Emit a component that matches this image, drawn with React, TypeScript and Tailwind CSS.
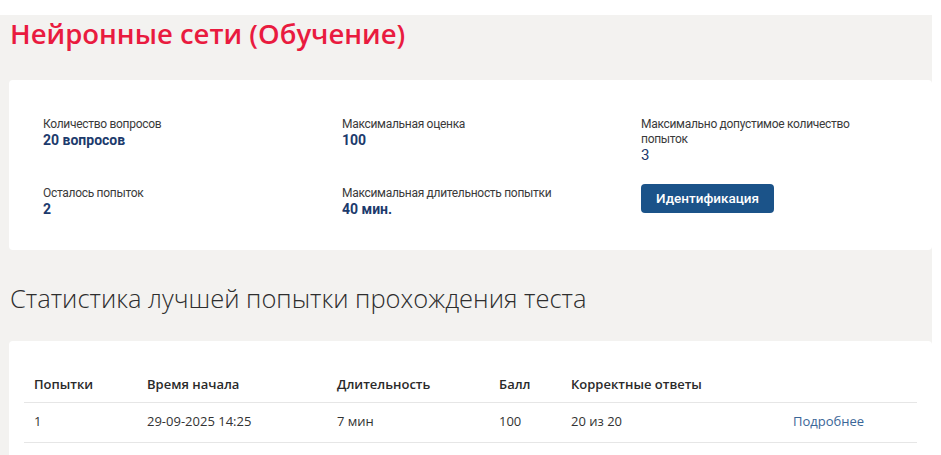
const stats = [
  { label: 'Количество вопросов', value: '20 вопросов' },
  { label: 'Максимальная оценка', value: '100' },
  { label: 'Максимально допустимое количество попыток', value: '3', normal: true },
  { label: 'Осталось попыток', value: '2' },
  { label: 'Максимальная длительность попытки', value: '40 мин.' },
]

const columns = ['Попытки', 'Время начала', 'Длительность', 'Балл', 'Корректные ответы', '']

const attempts = [
  { n: '1', start: '29-09-2025 14:25', duration: '7 мин', score: '100', correct: '20 из 20' },
]

function Stat({ label, value, normal }: { label: string; value: string; normal?: boolean }) {
  return (
    <div className="pt-[2px] pr-10 font-['Roboto','Noto_Sans',sans-serif]">
      <p className="text-[12px] leading-[15px] tracking-[-0.3px] text-[#3a3a3a]">{label}</p>
      <p
        className={
          normal
            ? 'text-[15px] leading-[17px] text-[#1c3a6c]'
            : 'text-[14px] font-bold leading-[17px] text-[#1c3a6c]'
        }
      >
        {value}
      </p>
    </div>
  )
}

export default function App() {
  return (
    <div className="min-h-screen bg-white pt-[15px] font-['Open_Sans','Noto_Sans',sans-serif]">
      <div className="w-[932px] bg-[#f3f2f0] pb-10 pl-[9px]">
        <h1 className="pl-[1px] text-[27.5px] font-semibold leading-[38px] text-[#e91b3f]">
          Нейронные сети (Обучение)
        </h1>

        <div className="mt-[27px] rounded-[4px] bg-white pt-[35px] pb-[32px] pl-[34px]">
          <div className="grid grid-cols-[299px_299px_1fr] gap-y-[20px]">
            {stats.slice(0, 3).map((s) => (
              <Stat key={s.label} {...s} />
            ))}
            {stats.slice(3).map((s) => (
              <Stat key={s.label} {...s} />
            ))}
            <div>
              <button
                type="button"
                className="h-[29px] rounded-[4px] bg-[#1b5389] px-[15px] font-['Roboto','Noto_Sans',sans-serif] text-[13.5px] font-medium text-white"
              >
                Идентификация
              </button>
            </div>
          </div>
        </div>

        <h2 className="pt-[32px] pb-[27px] pl-[1px] text-[25.5px] font-light leading-[32px] text-[#2e2e2e]">
          Статистика лучшей попытки прохождения теста
        </h2>

        <div className="rounded-[4px] bg-white pt-[27px] pr-[15px] pb-6 pl-[15px]">
          <table className="w-full table-fixed border-collapse text-left text-[13px] text-[#333]">
            <colgroup>
              <col className="w-[113px]" />
              <col className="w-[190px]" />
              <col className="w-[162px]" />
              <col className="w-[72px]" />
              <col className="w-[222px]" />
              <col />
            </colgroup>
            <thead>
              <tr className="border-b border-[#e6e6e6]">
                {columns.map((c, i) => (
                  <th key={i} className="h-[34px] px-[10px] align-middle font-semibold text-[#2a2a2a]">
                    {c}
                  </th>
                ))}
              </tr>
            </thead>
            <tbody>
              {attempts.map((a) => (
                <tr key={a.n} className="border-b border-[#e6e6e6]">
                  <td className="h-[40px] px-[10px] align-middle">{a.n}</td>
                  <td className="px-[10px] align-middle">{a.start}</td>
                  <td className="px-[10px] align-middle">{a.duration}</td>
                  <td className="px-[10px] align-middle">{a.score}</td>
                  <td className="px-[10px] align-middle">{a.correct}</td>
                  <td className="px-[10px] align-middle">
                    <a href="#" className="text-[#3a6697]">
                      Подробнее
                    </a>
                  </td>
                </tr>
              ))}
            </tbody>
          </table>
        </div>
      </div>
    </div>
  )
}
